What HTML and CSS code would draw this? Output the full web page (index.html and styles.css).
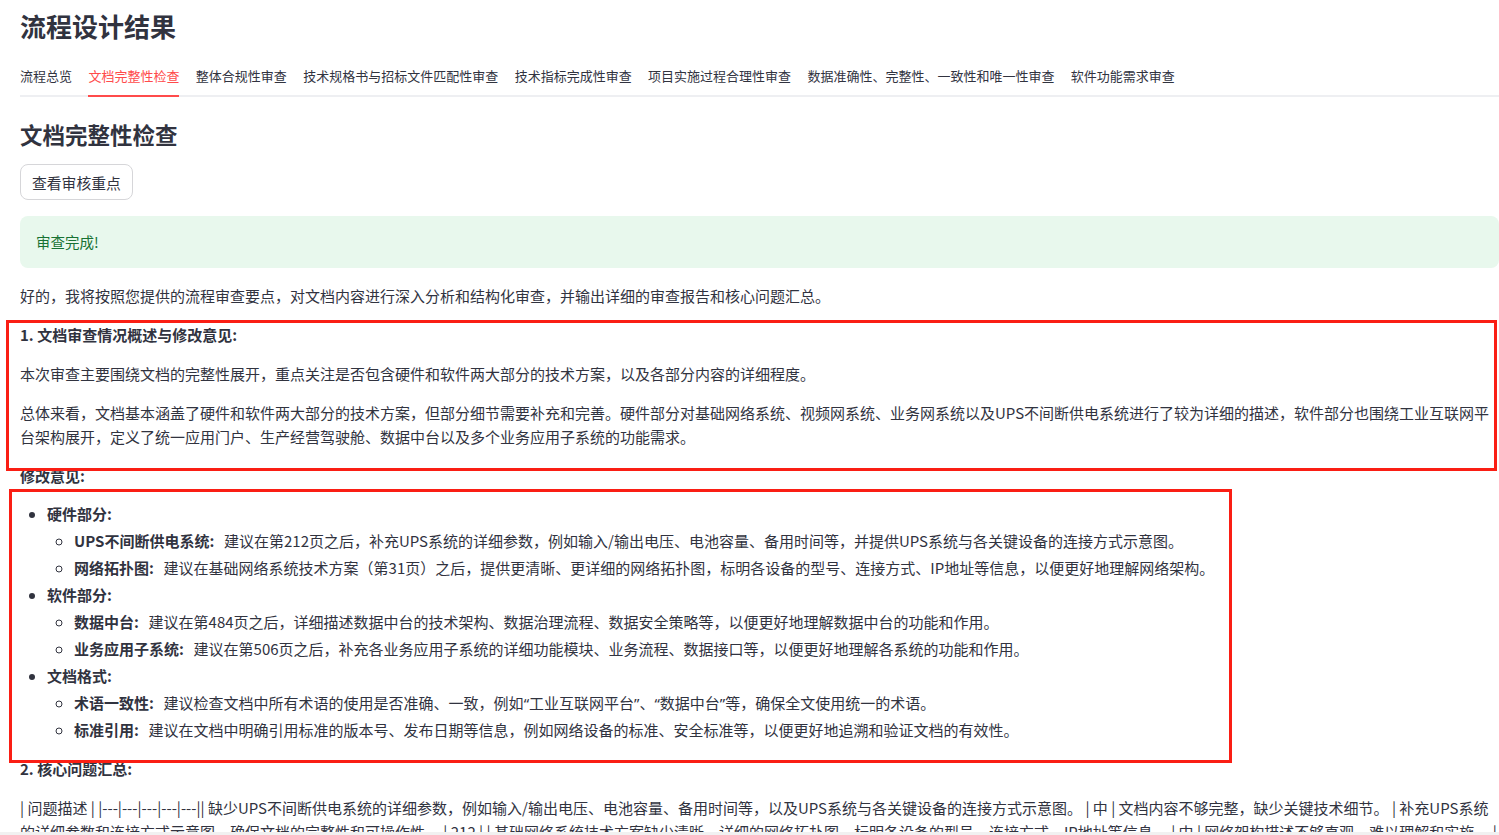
FILE: index.html
```html
<!DOCTYPE html>
<html lang="zh">
<head>
<meta charset="utf-8">
<title>流程设计结果</title>
<link rel="stylesheet" href="styles.css">
</head>
<body>
<main class="main">
  <h1 class="title">流程设计结果</h1>
  <nav class="tabs">
    <span class="tab">流程总览</span>
    <span class="tab active">文档完整性检查</span>
    <span class="tab">整体合规性审查</span>
    <span class="tab">技术规格书与招标文件匹配性审查</span>
    <span class="tab">技术指标完成性审查</span>
    <span class="tab">项目实施过程合理性审查</span>
    <span class="tab">数据准确性、完整性、一致性和唯一性审查</span>
    <span class="tab">软件功能需求审查</span>
  </nav>
  <h2 class="subtitle">文档完整性检查</h2>
  <button class="btn">查看审核重点</button>
  <div class="success">审查完成!</div>
  <div class="md">
    <p class="first">好的，我将按照您提供的流程审查要点，对文档内容进行深入分析和结构化审查，并输出详细的审查报告和核心问题汇总。</p>
    <p><strong>1. 文档审查情况概述与修改意见:</strong></p>
    <p>本次审查主要围绕文档的完整性展开，重点关注是否包含硬件和软件两大部分的技术方案，以及各部分内容的详细程度。</p>
    <p>总体来看，文档基本涵盖了硬件和软件两大部分的技术方案，但部分细节需要补充和完善。硬件部分对基础网络系统、视频网系统、业务网系统以及UPS不间断供电系统进行了较为详细的描述，软件部分也围绕工业互联网平台架构展开，定义了统一应用门户、生产经营驾驶舱、数据中台以及多个业务应用子系统的功能需求。</p>
    <p><strong>修改意见:</strong></p>
    <ul class="list">
      <li><strong>硬件部分:</strong>
        <ul class="sub">
          <li><strong>UPS不间断供电系统:</strong>&nbsp; 建议在第212页之后，补充UPS系统的详细参数，例如输入/输出电压、电池容量、备用时间等，并提供UPS系统与各关键设备的连接方式示意图。</li>
          <li><strong>网络拓扑图:</strong>&nbsp; 建议在基础网络系统技术方案（第31页）之后，提供更清晰、更详细的网络拓扑图，标明各设备的型号、连接方式、IP地址等信息，以便更好地理解网络架构。</li>
        </ul>
      </li>
      <li><strong>软件部分:</strong>
        <ul class="sub">
          <li><strong>数据中台:</strong>&nbsp; 建议在第484页之后，详细描述数据中台的技术架构、数据治理流程、数据安全策略等，以便更好地理解数据中台的功能和作用。</li>
          <li><strong>业务应用子系统:</strong>&nbsp; 建议在第506页之后，补充各业务应用子系统的详细功能模块、业务流程、数据接口等，以便更好地理解各系统的功能和作用。</li>
        </ul>
      </li>
      <li><strong>文档格式:</strong>
        <ul class="sub">
          <li><strong>术语一致性:</strong>&nbsp; 建议检查文档中所有术语的使用是否准确、一致，例如<span class="q">“</span>工业互联网平台<span class="q">”</span>、<span class="q">“</span>数据中台<span class="q">”</span>等，确保全文使用统一的术语。</li>
          <li><strong>标准引用:</strong>&nbsp; 建议在文档中明确引用标准的版本号、发布日期等信息，例如网络设备的标准、安全标准等，以便更好地追溯和验证文档的有效性。</li>
        </ul>
      </li>
    </ul>
    <p class="after-list"><strong>2. 核心问题汇总:</strong></p>
    <p>| 问题描述 | |---|---|---|---|---|| 缺少UPS不间断供电系统的详细参数，例如输入/输出电压、电池容量、备用时间等，以及UPS系统与各关键设备的连接方式示意图。 | 中 | 文档内容不够完整，缺少关键技术细节。 | 补充UPS系统的详细参数和连接方式示意图，确保文档的完整性和可操作性。 | 212 | | 基础网络系统技术方案缺少清晰、详细的网络拓扑图，标明各设备的型号、连接方式、IP地址等信息。 | 中 | 网络架构描述不够直观，难以理解和实施。 | 提供更清晰、更详细的网络拓扑图。 | 31 |</p>
  </div>
</main>
<div class="mark mark-a"></div>
<div class="mark mark-b"></div>
<div class="hscroll"></div>
</body>
</html>
```

FILE: styles.css
```css
html, body {
  margin: 0;
  padding: 0;
  background: #ffffff;
  overflow: hidden;
  height: 835px;
}
body {
  font-family: "Noto Sans CJK SC", "Noto Sans", sans-serif;
  color: #31333f;
  position: relative;
}
.main {
  padding: 8px 0 0 20px;
}
.title {
  margin: 0;
  font-size: 26px;
  line-height: 36px;
  font-weight: 700;
  color: #31333f;
}
.tabs {
  display: flex;
  gap: 16.4px;
  border-bottom: 2px solid #eeeff2;
  margin-top: 2px;
}
.tab {
  font-size: 13px;
  line-height: 20px;
  padding: 20px 0 9px;
  margin-bottom: -2px;
  border-bottom: 2px solid transparent;
  white-space: nowrap;
  color: #31333f;
}
.tab.active {
  color: #ff4b4b;
  border-bottom-color: #ff4b4b;
}
.subtitle {
  margin: 21px 0 0;
  font-size: 22.5px;
  line-height: 32px;
  font-weight: 700;
}
.btn {
  display: block;
  margin-top: 14px;
  height: 36px;
  padding: 0 11px;
  font-family: inherit;
  font-size: 14.8px;
  color: #31333f;
  background: #fff;
  border: 1px solid #d6d6d9;
  border-radius: 8px;
}
.success {
  margin-top: 16px;
  background: #e8f8ed;
  color: #177233;
  border-radius: 8px;
  padding: 15px 16px;
  font-size: 14.5px;
  line-height: 22px;
}
.md {
  font-size: 15px;
  line-height: 24px;
  padding-right: 0;
}
.md p {
  margin: 15px 0 0;
}
.md p.first {
  margin-top: 16px;
}
.md p.after-list {
  margin-top: 13px;
}
.md strong {
  font-weight: 700;
}
.sub strong {
  margin-right: 3px;
}
.q {
  font-family: "Noto Sans", sans-serif;
}
.list {
  margin: 13.2px 0 0;
  padding-left: 27px;
  list-style: disc;
}
.list li {
  line-height: 26.95px;
}
.sub {
  margin: 0;
  padding-left: 27px;
  list-style: circle;
}
.mark {
  position: absolute;
  border: 3px solid #fa1e14;
  pointer-events: none;
}
.mark-a {
  left: 6px;
  top: 320px;
  width: 1485px;
  height: 145px;
}
.mark-b {
  left: 9px;
  top: 489px;
  width: 1217px;
  height: 268px;
}
.hscroll {
  position: absolute;
  left: 0;
  right: 0;
  top: 832px;
  height: 3px;
  background: #f1f1f1;
}
```
